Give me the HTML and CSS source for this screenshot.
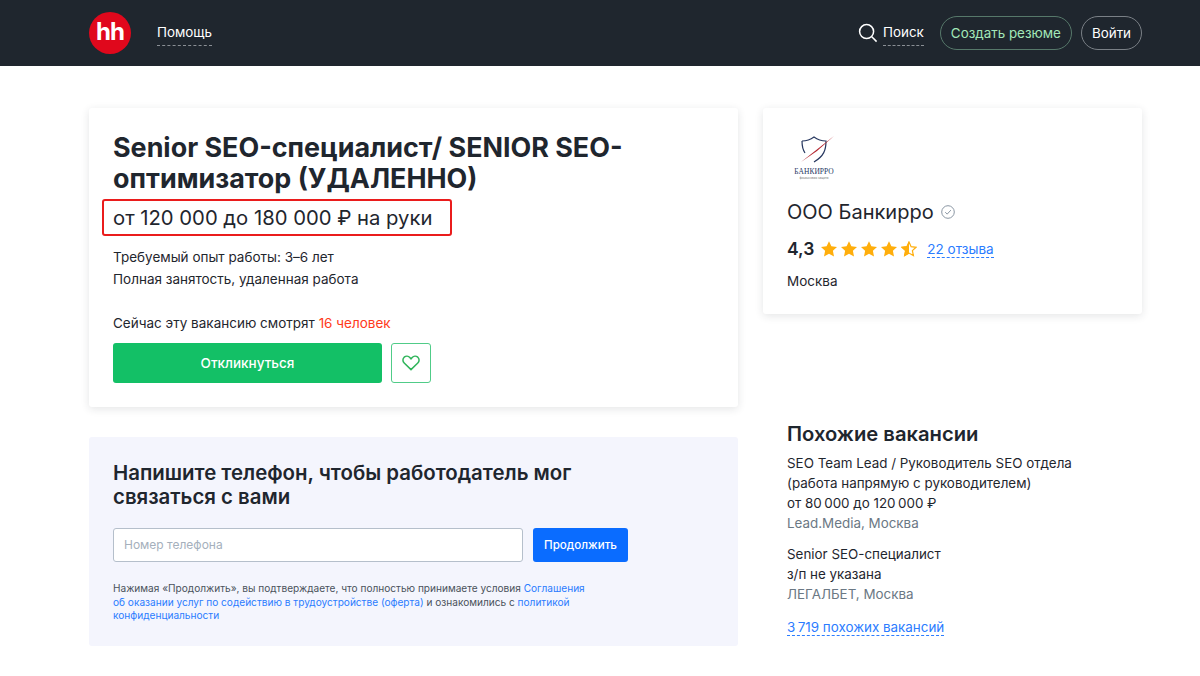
FILE: index.html
```html
<!DOCTYPE html>
<html>
<head>
<meta charset="utf-8">
<title>Senior SEO-специалист</title>
<link rel="stylesheet" href="styles.css">
</head>
<body>
<header class="topbar">
	<div class="topbar_in">
		<div class="logo_hh">hh</div>
		<span class="nav_link nav_help">Помощь</span>
		<div class="topbar_right">
			<svg class="search_icon" width="20" height="20" viewBox="0 0 20 20" fill="none" stroke="#fff" stroke-width="1.5"><circle cx="8.6" cy="8.6" r="7"/><path d="M13.8 13.8 L18.6 18.6"/></svg>
			<span class="nav_link nav_search">Поиск</span>
			<span class="pill pill_green">Создать резюме</span>
			<span class="pill pill_white">Войти</span>
		</div>
	</div>
</header>

<div class="page">
	<div class="col_left">
		<section class="card vacancy">
			<h1>Senior SEO-специалист/ SENIOR SEO-оптимизатор (УДАЛЕННО)</h1>
			<div class="salary">от 120 000 до 180 000 ₽ на руки<span class="salary_mark"></span></div>
			<p class="info">Требуемый опыт работы: 3–6 лет</p>
			<p class="info">Полная занятость, удаленная работа</p>
			<p class="watching">Сейчас эту вакансию смотрят <span class="red">16 человек</span></p>
			<div class="actions">
				<span class="btn_apply">Откликнуться</span>
				<span class="btn_heart">
					<svg width="18" height="16" viewBox="0 0 18 16" fill="none" stroke="#2fb45a" stroke-width="1.5"><path d="M9 14.6 L2.2 8 C0.4 6.2 0.6 3.6 2.2 2.2 C3.9 0.8 6.4 1 7.8 2.5 L9 3.8 L10.2 2.5 C11.6 1 14.1 0.8 15.8 2.2 C17.4 3.6 17.6 6.2 15.8 8 Z"/></svg>
				</span>
			</div>
		</section>

		<section class="phone_box">
			<h2>Напишите телефон, чтобы работодатель мог связаться с вами</h2>
			<div class="phone_form">
				<div class="phone_input">Номер телефона</div>
				<span class="btn_next">Продолжить</span>
			</div>
			<p class="terms">Нажимая «Продолжить», вы подтверждаете, что полностью принимаете условия <a>Соглашения</a><br><a>об оказании услуг по содействию в трудоустройстве (оферта)</a> и ознакомились с <a>политикой</a><br><a>конфиденциальности</a></p>
		</section>
	</div>

	<div class="col_right">
		<section class="card company">
			<div class="company_logo">
				<svg width="36" height="30" viewBox="0 0 36 30" fill="none">
					<path d="M2 6 C6 6 10 5 14 2 C18 5 22 6 26 6 C26 15 24 21 14 27" stroke="#26375f" stroke-width="1.2"/>
					<path d="M2 6 C2 11 3 15 5 18" stroke="#26375f" stroke-width="1.2"/>
					<path d="M1 27 L34 1 L17 16 Z" fill="#b3222c"/>
				</svg>
				<div class="logo_name">БАНКИРРО</div>
				<div class="logo_sub">финансовая защита</div>
			</div>
			<div class="company_name">ООО Банкирро
				<svg width="14" height="14" viewBox="0 0 14 14" fill="none" stroke="#8a96a3" stroke-width="1"><circle cx="7" cy="7" r="6.300"/><path d="M4.200 7.200 L6.200 9.100 L9.900 5.100"/></svg>
			</div>
			<div class="rating">
				<b>4,3</b>
				<span class="stars">
					<svg width="16" height="16" viewBox="0 0 16 16"><path class="star" d="M8 0.200 L10.400 5.300 L16 6 L11.900 9.800 L13 15.500 L8 12.700 L3 15.500 L4.100 9.800 L0 6 L5.600 5.300 Z"/></svg>
					<svg width="16" height="16" viewBox="0 0 16 16"><path class="star" d="M8 0.200 L10.400 5.300 L16 6 L11.900 9.800 L13 15.500 L8 12.700 L3 15.500 L4.100 9.800 L0 6 L5.600 5.300 Z"/></svg>
					<svg width="16" height="16" viewBox="0 0 16 16"><path class="star" d="M8 0.200 L10.400 5.300 L16 6 L11.900 9.800 L13 15.500 L8 12.700 L3 15.500 L4.100 9.800 L0 6 L5.600 5.300 Z"/></svg>
					<svg width="16" height="16" viewBox="0 0 16 16"><path class="star" d="M8 0.200 L10.400 5.300 L16 6 L11.900 9.800 L13 15.500 L8 12.700 L3 15.500 L4.100 9.800 L0 6 L5.600 5.300 Z"/></svg>
					<svg width="16" height="16" viewBox="0 0 16 16"><path d="M8 1 L10.100 5.700 L15 6.300 L11.400 9.600 L12.400 14.600 L8 12.100 L3.600 14.600 L4.600 9.600 L1 6.300 L5.900 5.700 Z" fill="#fff" stroke="#ffae0c" stroke-width="1.200"/><path class="star" d="M8 0.200 L8 12.700 L3 15.500 L4.100 9.800 L0 6 L5.600 5.300 Z"/></svg>
				</span>
				<a class="dashed_link">22 отзыва</a>
			</div>
			<div class="city">Москва</div>
		</section>

		<section class="similar">
			<h3>Похожие вакансии</h3>
			<div class="similar_item">
				<div>SEO Team Lead / Руководитель SEO отдела<br>(работа напрямую с руководителем)</div>
				<div>от 80&thinsp;000 до 120&thinsp;000 ₽</div>
				<div class="muted">Lead.Media, Москва</div>
			</div>
			<div class="similar_item">
				<div>Senior SEO-специалист</div>
				<div>з/п не указана</div>
				<div class="muted">ЛЕГАЛБЕТ, Москва</div>
			</div>
			<a class="more_link">3&thinsp;719 похожих вакансий</a>
		</section>
	</div>
</div>
</body>
</html>
```

FILE: styles.css
```css
*{box-sizing: border-box;}
html,body{margin: 0;padding: 0;}
body{background: #fff;color: #1f262e;font-family: Inter,"Noto Sans",sans-serif;font-size: 13.500px;line-height: 20px;height: 676px;overflow: hidden;}
h1,h2,h3,p{margin: 0;}

.topbar{height: 66px;background: #1f262e;}
.topbar_in{width: 1053px;margin-left: 89px;height: 66px;display: flex;align-items: center;}
.logo_hh{width: 42px;height: 42px;border-radius: 50%;background: #e0081c;color: #fff;font-size: 24px;font-weight: 700;letter-spacing: -1px;line-height: 40px;text-align: center;}
.nav_link{color: #fff;font-size: 13.400px;line-height: 20px;padding-bottom: 3px;border-bottom: 1px dashed #8a8f95;}
.nav_help{margin-left: 26px;margin-top: 2px;}
.topbar_right{margin-left: auto;display: flex;align-items: center;}
.search_icon{margin-right: 5px;}
.nav_search{margin-top: 2px;}
.pill{height: 34px;border-radius: 17px;line-height: 32px;font-size: 13.400px;padding: 0 10px;}
.pill_green{color: #a3e8b8;border: 1px solid #56786a;margin-left: 16px;}
.pill_white{color: #fff;border: 1px solid #7a8086;margin-left: 9px;}

.page{width: 1053px;margin: 42px 0 0 89px;display: flex;gap: 25px;}
.col_left{width: 649px;}
.col_right{width: 379px;}
.card{background: #fff;border-radius: 3px;box-shadow: 0 2px 8px rgba(31,38,46,.12);}

.vacancy{height: 299px;padding: 24px;}
h1{font-size: 26.900px;line-height: 31px;font-weight: 700;}
.salary{position: relative;font-size: 20.250px;line-height: 26px;margin-top: 11px;margin-bottom: 15px;}
.salary_mark{position: absolute;left: -11px;top: -6px;width: 350px;height: 37px;border: 2px solid #ea1c1c;border-radius: 3px;}
.info{line-height: 22px;}
.watching{margin-top: 23px;}
.red{color: #ff3a20;}
.actions{display: flex;gap: 9px;margin-top: 10px;}
.btn_apply{width: 269px;height: 40px;background: #13c066;border-radius: 3px;color: #fff;text-align: center;line-height: 40px;font-weight: 500;}
.btn_heart{width: 40px;height: 40px;border: 1.500px solid #50cc88;border-radius: 3px;display: flex;align-items: center;justify-content: center;}

.phone_box{margin-top: 30px;height: 209px;background: #f4f5fd;border-radius: 3px;padding: 24px;}
h2{font-size: 20.400px;line-height: 24px;font-weight: 600;width: 500px;}
.phone_form{display: flex;gap: 10px;margin-top: 19px;}
.phone_input{width: 410px;height: 34px;background: #fff;border: 1px solid #b5bfcb;border-radius: 3px;color: #a5b0bc;font-size: 12px;line-height: 32px;padding-left: 10px;}
.btn_next{width: 95px;height: 34px;background: #0a6cff;border-radius: 3px;color: #fff;text-align: center;font-size: 11.600px;font-weight: 500;line-height: 34px;}
.terms{margin-top: 20px;width: 500px;font-size: 10.100px;line-height: 13.500px;color: #4a525b;}
.terms a{color: #2b7cff;}

.company{height: 206px;padding: 24px;}
.company_logo{width: 54px;text-align: center;height: 48px;color: #26375f;}
.company_logo svg{display: block;margin: 3px 0 0 13px;}
.logo_name{font-family: "Liberation Serif",serif;font-size: 7.500px;line-height: 9px;margin-top: 2px;}
.logo_sub{font-size: 3px;line-height: 4px;color: #777;}
.company_name{font-size: 20px;line-height: 26px;margin-top: 16px;}
.company_name svg{margin-left: 2px;}
.rating{display: flex;align-items: center;margin-top: 12px;height: 24px;}
.rating b{font-size: 17.500px;font-weight: 600;}
.stars{display: flex;gap: 4px;margin-left: 7px;}
.star{fill: #ffae0c;}
.dashed_link{color: #2b7cff;margin-left: 10px;border-bottom: 1px dashed #2b7cff;line-height: 16px;}
.city{margin-top: 10px;}

.similar{margin-top: 107px;padding-left: 24px;font-size: 13.400px;}
h3{font-size: 20.200px;line-height: 26px;font-weight: 600;margin-bottom: 6px;}
.similar_item{margin-bottom: 11px;}
.muted{color: #6b7884;}
.more_link{display: inline-block;margin-top: 4px;color: #2b7cff;border-bottom: 1px dashed #2b7cff;line-height: 16px;}
```
